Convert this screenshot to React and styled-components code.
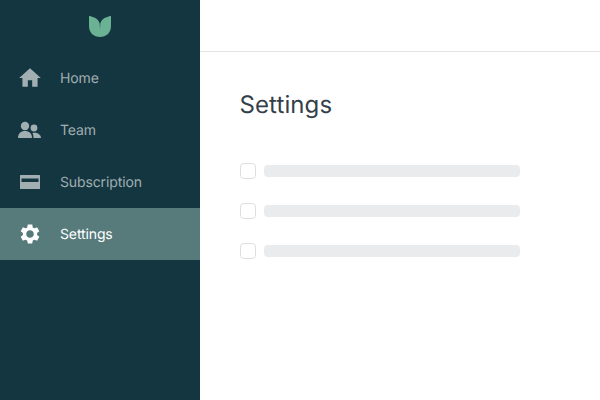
import React from "react"
import styled, { createGlobalStyle } from "styled-components"

const GlobalStyle = createGlobalStyle`
  html, body {
    margin: 0;
    height: 100%;
    background: #fff;
    font-family: Inter, "Liberation Sans", sans-serif;
    text-rendering: geometricPrecision;
  }
  #root {
    height: 100%;
  }
`

const Page = styled.div`
  display: flex;
  width: 600px;
  height: 400px;
  overflow: hidden;
`

const Sidebar = styled.nav`
  flex: 0 0 200px;
  background: #143640;
`

const LogoBar = styled.div`
  box-sizing: border-box;
  display: flex;
  justify-content: center;
  align-items: center;
  height: 52px;
  padding-top: 1px;
`

const NavItem = styled.a`
  display: flex;
  align-items: center;
  gap: 17px;
  height: 52px;
  padding-left: 17px;
  font-size: 14px;
  letter-spacing: -0.12px;
  color: ${props => (props.$active ? "#fff" : "rgba(255, 255, 255, 0.6)")};
  background: ${props => (props.$active ? "#577b7b" : "transparent")};
`

const NavLabel = styled.span`
  line-height: 16px;
  padding-top: 2px;
`

const Main = styled.main`
  flex: 1;
  min-width: 0;
`

const TopBar = styled.header`
  height: 51px;
  border-bottom: 1px solid #e2e4e6;
`

const Content = styled.section`
  padding: 37px 40px 0;
`

const Title = styled.h1`
  margin: 0 0 42px -0.5px;
  font-size: 24px;
  line-height: 32px;
  font-weight: 400;
  letter-spacing: 0.1px;
  color: #333f4a;
`

const Rows = styled.div`
  display: flex;
  flex-direction: column;
  gap: 24px;
`

const Row = styled.div`
  display: flex;
  align-items: center;
  gap: 8px;
`

const Checkbox = styled.span`
  box-sizing: border-box;
  width: 16px;
  height: 16px;
  border: 1px solid #dcdfe2;
  border-radius: 4px;
  background: #fff;
`

const Placeholder = styled.span`
  width: 256px;
  height: 12px;
  border-radius: 4px;
  background: #e9ebed;
`

const Logo = () => (
  <svg width="22" height="21" viewBox="0 0 22 21" fill="#6bb294">
    <path d="M0 0C5 .8 9.5 3 10.7 7.500L11 14L11.300 7.500C12.500 3 17 .8 22 0V10C22 17 17 21 11 21C5 21 0 17 0 10Z" />
  </svg>
)

const HomeIcon = () => (
  <svg width="26" height="26" viewBox="0 0 24 24" fill="currentColor">
    <path d="M10 20v-6h4v6h5v-8h3L12 3 2 12h3v8z" />
  </svg>
)

const TeamIcon = () => (
  <svg width="26" height="26" viewBox="0 0 26 26" fill="currentColor">
    <circle cx="8" cy="9" r="4.2" />
    <path d="M1 21c0-4.400 3-7 7-7s7 2.600 7 7Z" />
    <circle cx="17" cy="11" r="3.4" />
    <path d="M15.500 16c3.800-1 8.500 1 8.500 5h-7.500c0-2-.3-3.500-1-5Z" />
  </svg>
)

const CardIcon = () => (
  <svg width="26" height="26" viewBox="0 0 26 26" fill="currentColor">
    <path
      fillRule="evenodd"
      d="M3.500 6h19a.5.5 0 0 1 .5.5v13a.5.5 0 0 1-.5.5h-19a.5.5 0 0 1-.5-.5v-13a.5.5 0 0 1 .5-.5ZM4.500 9.500V13h17V9.500Z"
    />
  </svg>
)

const GearIcon = () => (
  <svg width="26" height="26" viewBox="-1.7 -1.7 27.4 27.4" fill="currentColor">
    <path d="M19.43 12.98c.04-.32.07-.64.07-.98s-.03-.66-.07-.98l2.11-1.65c.19-.15.24-.42.12-.64l-2-3.46c-.12-.22-.39-.3-.61-.22l-2.49 1c-.52-.4-1.08-.73-1.69-.98l-.38-2.65C14.46 2.18 14.25 2 14 2h-4c-.25 0-.46.18-.49.42l-.38 2.65c-.61.25-1.17.59-1.69.98l-2.49-1c-.23-.09-.49 0-.61.22l-2 3.46c-.13.22-.07.49.12.64l2.11 1.65c-.04.32-.07.65-.07.98s.03.66.07.98l-2.11 1.65c-.19.15-.24.42-.12.64l2 3.46c.12.22.39.3.61.22l2.49-1c.52.4 1.08.73 1.69.98l.38 2.65c.03.24.24.42.49.42h4c.25 0 .46-.18.49-.42l.38-2.65c.61-.25 1.17-.59 1.69-.98l2.49 1c.23.09.49 0 .61-.22l2-3.46c.12-.22.07-.49-.12-.64l-2.11-1.65zM12 16c-2.21 0-4-1.79-4-4s1.79-4 4-4 4 1.79 4 4-1.79 4-4 4z" />
  </svg>
)

const navItems = [
  { label: "Home", icon: HomeIcon },
  { label: "Team", icon: TeamIcon },
  { label: "Subscription", icon: CardIcon },
  { label: "Settings", icon: GearIcon, active: true },
]

const App = () => (
  <Page>
    <GlobalStyle />
    <Sidebar>
      <LogoBar>
        <Logo />
      </LogoBar>
      {navItems.map(({ label, icon: Icon, active }) => (
        <NavItem key={label} $active={active}>
          <Icon />
          <NavLabel>{label}</NavLabel>
        </NavItem>
      ))}
    </Sidebar>
    <Main>
      <TopBar />
      <Content>
        <Title>Settings</Title>
        <Rows>
          {[0, 1, 2].map(key => (
            <Row key={key}>
              <Checkbox />
              <Placeholder />
            </Row>
          ))}
        </Rows>
      </Content>
    </Main>
  </Page>
)

export default App
